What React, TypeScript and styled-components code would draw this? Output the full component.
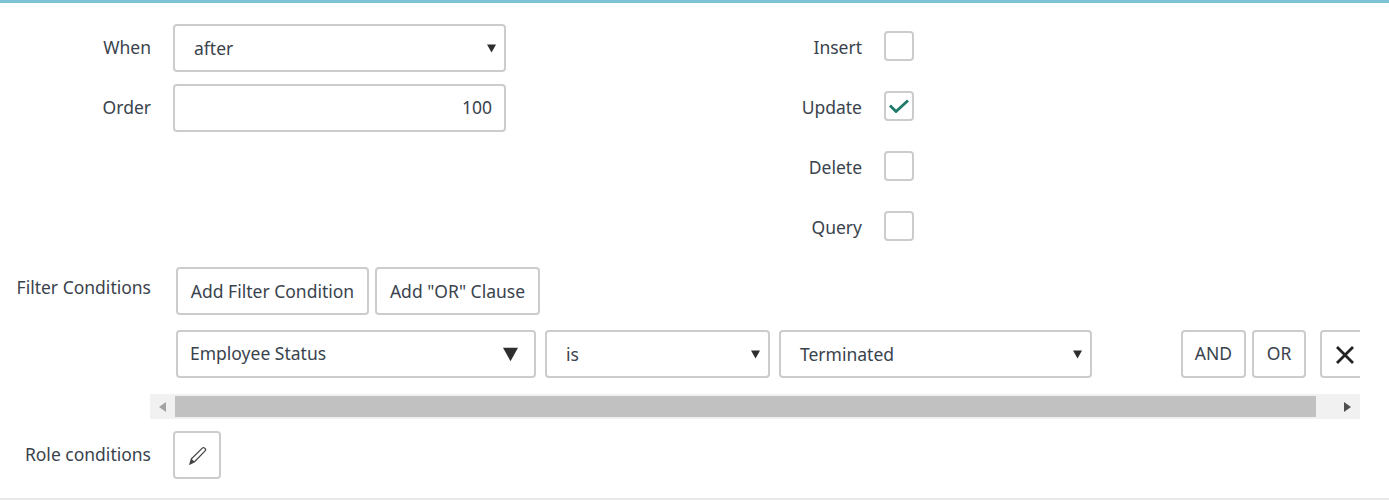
import React from "react";
import styled, { createGlobalStyle } from "styled-components";

const GlobalStyle = createGlobalStyle`
  html, body {
    margin: 0;
    padding: 0;
    background: #fff;
  }
  body {
    font-family: "Noto Sans", "Open Sans", sans-serif;
    font-size: 17.5px;
    color: #3a434d;
  }
`;

const Page = styled.div`
  width: 1389px;
  height: 503px;
  box-sizing: border-box;
  overflow: hidden;
  border-top: 3px solid #7cc3d6;
`;

const TopSection = styled.section`
  display: flex;
  align-items: flex-start;
  height: 264px;
`;

const LeftFields = styled.div`
  display: grid;
  grid-template-columns: 151px 333px;
  column-gap: 22px;
  row-gap: 12px;
  padding-top: 21px;
  align-items: center;
`;

const RightFields = styled.div`
  display: grid;
  grid-template-columns: 356px 30px;
  column-gap: 22px;
  grid-auto-rows: 60px;
  padding-top: 13px;
  align-items: center;
`;

const Label = styled.label<{ $shift?: number }>`
  text-align: right;
  white-space: nowrap;
  line-height: 22px;
  position: relative;
  top: ${(p) => p.$shift ?? 0}px;
`;

const Control = styled.div<{ $width?: number }>`
  display: flex;
  align-items: center;
  justify-content: space-between;
  box-sizing: border-box;
  height: 48px;
  flex: none;
  width: ${(p) => (p.$width ? `${p.$width}px` : "auto")};
  background: #fff;
  border: 2px solid #cccccc;
  border-radius: 4px;
`;

const SelectBox = styled(Control)<{ $inset: number; $end?: number; $lift?: number }>`
  padding-left: ${(p) => p.$inset}px;
  padding-right: ${(p) => p.$end ?? 8}px;
  padding-bottom: ${(p) => p.$lift ?? 0}px;
`;

const NumberBox = styled(Control)`
  justify-content: flex-end;
  padding: 0 12px 2px 13px;
`;

const Caret = styled.svg<{ $drop: number }>`
  display: block;
  flex: none;
  position: relative;
  top: ${(p) => p.$drop}px;
`;

const CheckBox = styled.div`
  display: flex;
  align-items: center;
  justify-content: center;
  box-sizing: border-box;
  width: 30px;
  height: 30px;
  border: 2px solid #cccccc;
  border-radius: 4px;
`;

const FilterSection = styled.section`
  display: grid;
  grid-template-columns: 151px 1fr;
  align-items: start;
`;

const FilterLabel = styled(Label)`
  padding-top: 9px;
`;

const FilterBody = styled.div`
  width: 1210px;
  margin-left: -1px;
`;

const Button = styled.button<{ $width: number; $lift?: number }>`
  box-sizing: border-box;
  flex: none;
  height: 48px;
  width: ${(p) => p.$width}px;
  padding: 0 0 ${(p) => p.$lift ?? 0}px;
  font: inherit;
  color: inherit;
  background: #fff;
  border: 2px solid #cccccc;
  border-radius: 4px;
  display: flex;
  align-items: center;
  justify-content: center;
  white-space: nowrap;
`;

const ButtonRow = styled.div`
  display: flex;
  gap: 6px;
  padding-left: 26px;
`;

const ConditionRow = styled.div`
  display: flex;
  padding: 15px 0 16px 26px;
  overflow: hidden;
`;

const ConditionFields = styled.div`
  display: flex;
  gap: 9px;
`;

const ConditionActions = styled.div`
  display: flex;
  gap: 6px;
  margin-left: 89px;
`;

const RemoveButton = styled(Button)`
  margin-left: 8px;
  padding: 2px 10px 0 0;
`;

const ScrollBar = styled.div`
  display: flex;
  height: 25px;
  background: #f1f1f1;
`;

const ScrollArrow = styled.div<{ $width: number; $end: number }>`
  display: flex;
  align-items: center;
  justify-content: flex-end;
  flex: none;
  box-sizing: border-box;
  width: ${(p) => p.$width}px;
  padding-right: ${(p) => p.$end}px;
`;

const ScrollTrack = styled.div`
  flex: 1;
  padding: 2px 0;
`;

const ScrollThumb = styled.div`
  height: 21px;
  background: #c1c1c1;
`;

const RoleRow = styled.section`
  display: grid;
  grid-template-columns: 151px 48px;
  column-gap: 22px;
  align-items: center;
  padding: 12px 0 19px;
  border-bottom: 2px solid #e8e8e8;
`;

const Down = ({ size = 9, drop = 0 }: { size?: number; drop?: number }) => (
  <Caret $drop={drop} width={size} height={size} viewBox="0 0 10 10">
    <path d="M0 0.5h10L5 9.5z" fill="#2e2e2e" />
  </Caret>
);

const checks = [
  { name: "Insert", on: false },
  { name: "Update", on: true },
  { name: "Delete", on: false },
  { name: "Query", on: false },
];

export default function App() {
  return (
    <Page>
      <GlobalStyle />
      <TopSection>
        <LeftFields>
          <Label $shift={-1}>When</Label>
          <SelectBox $inset={19}>
            after
            <Down />
          </SelectBox>
          <Label $shift={-1}>Order</Label>
          <NumberBox>100</NumberBox>
        </LeftFields>
        <RightFields>
          {checks.map((c) => (
            <React.Fragment key={c.name}>
              <Label $shift={1}>{c.name}</Label>
              <CheckBox>
                {c.on && (
                  <svg width="20" height="14" viewBox="0 0 20 14">
                    <path d="M1 6.5l6 6L19 1.5" fill="none" stroke="#1f7a6b" strokeWidth="2.8" />
                  </svg>
                )}
              </CheckBox>
            </React.Fragment>
          ))}
        </RightFields>
      </TopSection>
      <FilterSection>
        <FilterLabel>Filter Conditions</FilterLabel>
        <FilterBody>
          <ButtonRow>
            <Button $width={193}>Add Filter Condition</Button>
            <Button $width={165}>Add "OR" Clause</Button>
          </ButtonRow>
          <ConditionRow>
            <ConditionFields>
              <SelectBox $width={360} $inset={12} $end={16} $lift={2}>
                Employee Status
                <Down size={15} drop={1} />
              </SelectBox>
              <SelectBox $width={225} $inset={19}>
                is
                <Down />
              </SelectBox>
              <SelectBox $width={313} $inset={19}>
                Terminated
                <Down />
              </SelectBox>
            </ConditionFields>
            <ConditionActions>
              <Button $width={65} $lift={2}>AND</Button>
              <Button $width={54} $lift={2}>OR</Button>
              <RemoveButton $width={60}>
                <svg width="18" height="18" viewBox="0 0 18 18">
                  <path d="M1 1l16 16M17 1L1 17" stroke="#222" strokeWidth="2.8" fill="none" />
                </svg>
              </RemoveButton>
            </ConditionActions>
          </ConditionRow>
          <ScrollBar>
            <ScrollArrow $width={25} $end={9}>
              <svg width="7" height="10" viewBox="0 0 7 10">
                <path d="M7 0v10L0 5z" fill="#a3a3a3" />
              </svg>
            </ScrollArrow>
            <ScrollTrack>
              <ScrollThumb />
            </ScrollTrack>
            <ScrollArrow $width={44} $end={9}>
              <svg width="7" height="10" viewBox="0 0 7 10">
                <path d="M0 0v10L7 5z" fill="#505050" />
              </svg>
            </ScrollArrow>
          </ScrollBar>
        </FilterBody>
      </FilterSection>
      <RoleRow>
        <Label $shift={-1}>Role conditions</Label>
        <Button $width={48}>
          <svg width="20" height="20" viewBox="0 0 20 20">
            <path
              d="M3 19l1.4-5.2L15.6 2.9a1.2 1.2 0 0 1 1.7 0l1 1a1.2 1.2 0 0 1 0 1.7L7.6 16.8z"
              fill="none"
              stroke="#444"
              strokeWidth="1.3"
            />
            <path d="M3 19l1.4-5.2 3.2 3z" fill="#444" />
          </svg>
        </Button>
      </RoleRow>
    </Page>
  );
}
